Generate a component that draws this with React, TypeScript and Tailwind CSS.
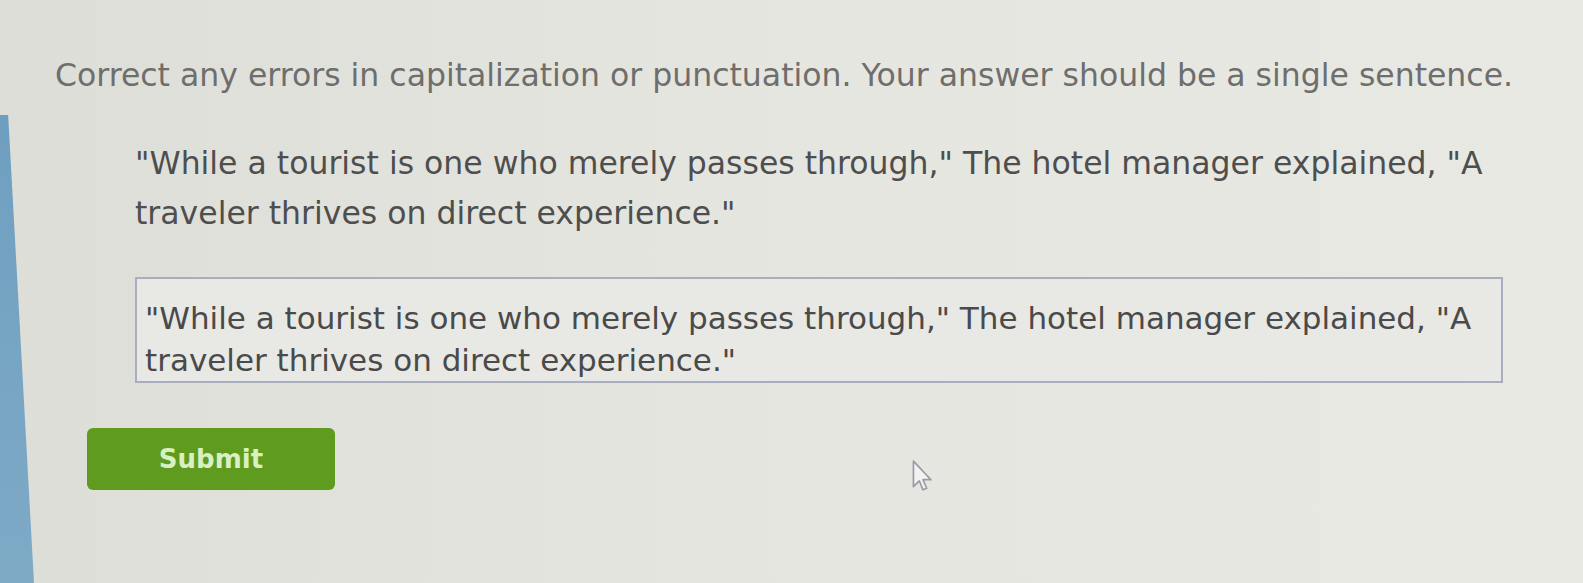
import React from "react";

export default function App() {
  const font = { fontFamily: '"DejaVu Sans", Verdana, sans-serif' };
  return (
    <div
      className="relative flex w-[1583px] h-[583px] overflow-hidden bg-gradient-to-r from-[#dedeD9] via-[#e6e6e1] to-[#e9e9e4]"
      style={font}
    >
      {/* left blue sidebar (photographed at an angle) */}
      <div className="flex flex-col w-[34px] shrink-0">
        <div className="h-[115px]" />
        <div className="flex-1 bg-gradient-to-b from-[#6f9fc0] to-[#7eaac6] [clip-path:polygon(0_0,24%_0,100%_100%,0_100%)]" />
      </div>

      <div className="flex flex-col flex-1 pt-[55px]">
        <h1 className="ml-[21px] text-[31.5px] leading-[40px] font-normal text-[#6e6e6c] whitespace-nowrap">
          Correct any errors in capitalization or punctuation. Your answer should be a single sentence.
        </h1>

        <p className="ml-[101px] mt-[43px] w-[1400px] text-[31.5px] leading-[50px] text-[#4e4e4e] whitespace-nowrap">
          "While a tourist is one who merely passes through," The hotel manager explained, "A
          <br />
          traveler thrives on direct experience."
        </p>

        <div className="ml-[101px] mt-[39px] w-[1368px] h-[106px] border-2 border-[#a9adc0] bg-[#e8e8e4] pl-[8px] pt-[18px]">
          <p className="text-[31px] leading-[42px] text-[#4a4a4a] whitespace-nowrap">
            "While a tourist is one who merely passes through," The hotel manager explained, "A
            <br />
            traveler thrives on direct experience."
          </p>
        </div>

        <button className="ml-[53px] mt-[45px] w-[248px] h-[62px] rounded-[6px] bg-[#5e9b1f] text-[#d8f0c2] text-[26px] font-bold flex items-center justify-center">
          Submit
        </button>
      </div>

      {/* mouse cursor */}
      <svg
        className="absolute left-[911px] top-[459px]"
        width="24"
        height="34"
        viewBox="0 0 22 32"
      >
        <path
          d="M2 2 L2 26 L7.5 20.5 L11 29 L14.5 27.5 L11 19.5 L18.5 19.5 Z"
          fill="#f2f2f0"
          stroke="#9b9aa6"
          strokeWidth="1.6"
          strokeLinejoin="round"
        />
      </svg>
    </div>
  );
}
